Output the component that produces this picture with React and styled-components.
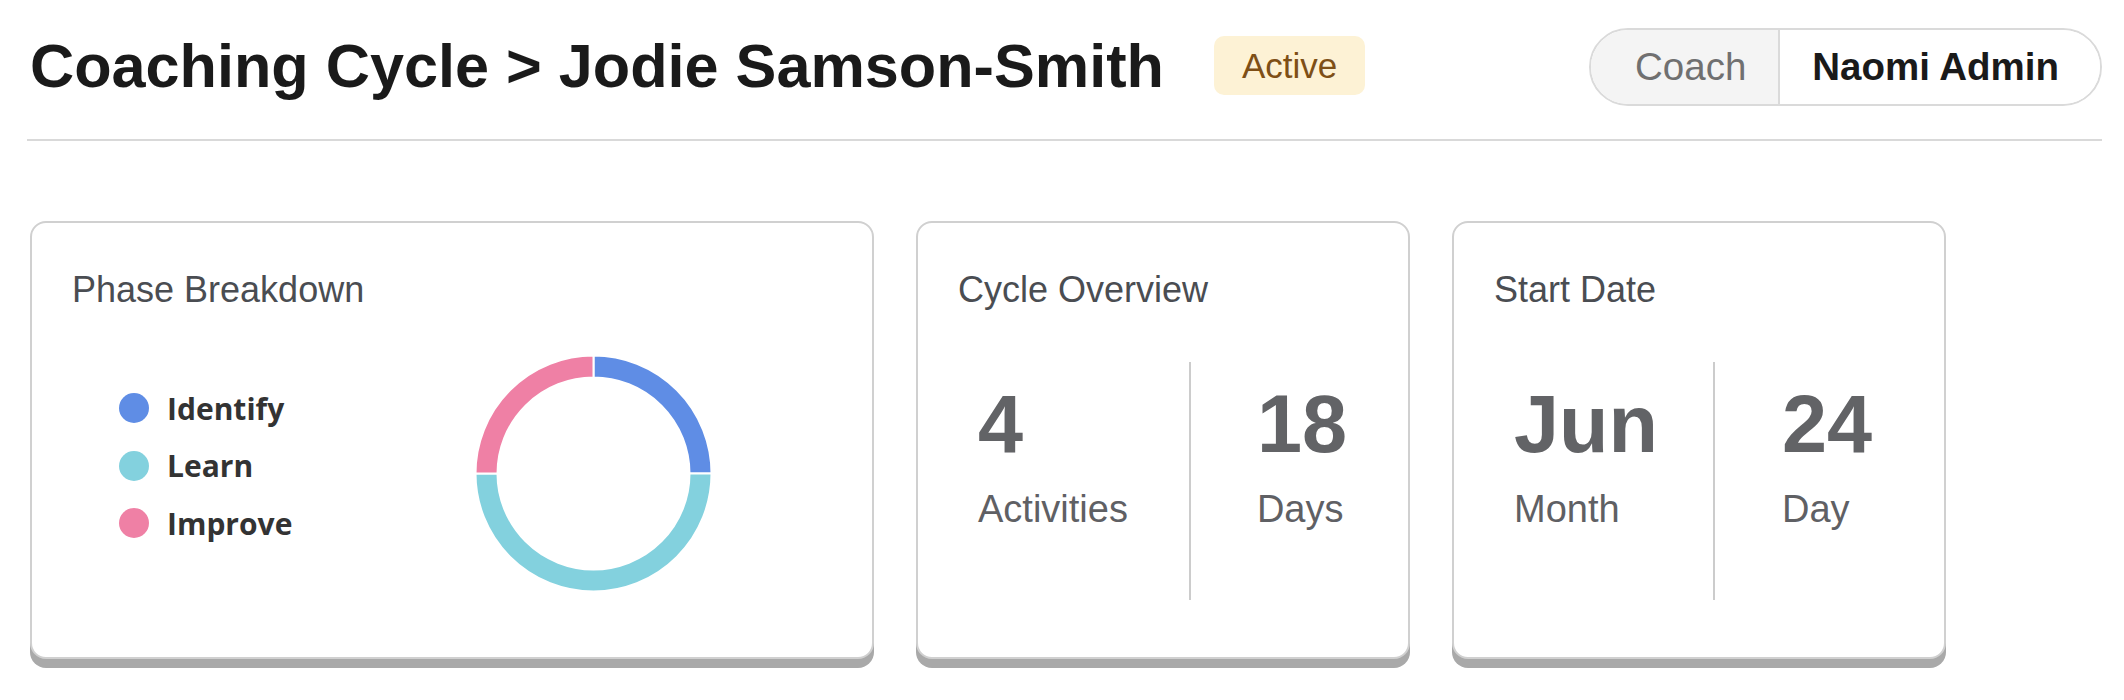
import React from 'react'
import styled, { createGlobalStyle } from 'styled-components'

const GlobalStyle = createGlobalStyle`
  * { box-sizing: border-box; }
  body {
    margin: 0;
    background: #ffffff;
    font-family: "Liberation Sans", Arial, sans-serif;
  }
`

const phases = [
  { name: 'Identify', color: '#5f8de5', value: 1 },
  { name: 'Learn', color: '#83d1de', value: 2 },
  { name: 'Improve', color: '#ef80a5', value: 1 },
]

const point = (cx, cy, r, deg) => {
  const a = ((deg - 90) * Math.PI) / 180
  return [cx + r * Math.cos(a), cy + r * Math.sin(a)]
}

const sector = (cx, cy, ro, ri, start, end) => {
  const large = end - start > 180 ? 1 : 0
  const [x1, y1] = point(cx, cy, ro, start)
  const [x2, y2] = point(cx, cy, ro, end)
  const [x3, y3] = point(cx, cy, ri, end)
  const [x4, y4] = point(cx, cy, ri, start)
  return `M${x1} ${y1} A${ro} ${ro} 0 ${large} 1 ${x2} ${y2} L${x3} ${y3} A${ri} ${ri} 0 ${large} 0 ${x4} ${y4} Z`
}

const Donut = () => {
  const total = phases.reduce((s, p) => s + p.value, 0)
  let angle = 0
  return (
    <svg width="237" height="237" viewBox="0 0 237 237">
      {phases.map((p) => {
        const start = angle
        angle += (p.value / total) * 360
        return (
          <path
            key={p.name}
            d={sector(118.5, 118.5, 118, 96, start, angle)}
            fill={p.color}
            stroke="#ffffff"
            strokeWidth="2"
          />
        )
      })}
    </svg>
  )
}

const App = () => {
  return (
    <Page>
      <GlobalStyle />
      <Header>
        <TitleGroup>
          <Title>Coaching Cycle &gt; Jodie Samson-Smith</Title>
          <Badge>Active</Badge>
        </TitleGroup>
        <Toggle>
          <ToggleOption>Coach</ToggleOption>
          <ToggleOption active>Naomi Admin</ToggleOption>
        </Toggle>
      </Header>
      <Cards>
        <Card width={844}>
          <CardTitle>Phase Breakdown</CardTitle>
          <ChartBody>
            <Legend>
              {phases.map((p) => (
                <LegendItem key={p.name}>
                  <Dot color={p.color} />
                  <LegendLabel>{p.name}</LegendLabel>
                </LegendItem>
              ))}
            </Legend>
            <Donut />
          </ChartBody>
        </Card>
        <Card width={494}>
          <CardTitle>Cycle Overview</CardTitle>
          <StatRow>
            <Stat side="left" space={61}>
              <StatValue>4</StatValue>
              <StatLabel>Activities</StatLabel>
            </Stat>
            <Stat side="right" space={66}>
              <StatValue>18</StatValue>
              <StatLabel>Days</StatLabel>
            </Stat>
          </StatRow>
        </Card>
        <Card width={494}>
          <CardTitle>Start Date</CardTitle>
          <StatRow>
            <Stat side="left" space={55}>
              <StatValue>Jun</StatValue>
              <StatLabel>Month</StatLabel>
            </Stat>
            <Stat side="right" space={67}>
              <StatValue>24</StatValue>
              <StatLabel>Day</StatLabel>
            </Stat>
          </StatRow>
        </Card>
      </Cards>
    </Page>
  )
}

const Page = styled.div`
  width: 2124px;
  height: 700px;
  padding: 0 22px 0 27px;
`

const Header = styled.header`
  display: flex;
  align-items: center;
  justify-content: space-between;
  padding: 28px 0 33px;
  border-bottom: 2px solid #d9d9d9;
`

const TitleGroup = styled.div`
  display: flex;
  align-items: center;
  gap: 50px;
  padding-left: 3px;
`

const Title = styled.h1`
  margin: 0;
  font-size: 61.2px;
  line-height: 1;
  font-weight: 700;
  color: #1a1a1a;
`

const Badge = styled.span`
  display: inline-flex;
  align-items: center;
  height: 59px;
  padding: 0 28px;
  border-radius: 10px;
  background: #fdf2d5;
  color: #7e4f16;
  font-size: 35px;
  margin-top: -2px;
`

const Toggle = styled.div`
  display: flex;
  height: 78px;
  border: 2px solid #dadada;
  border-radius: 39px;
  overflow: hidden;
`

const ToggleOption = styled.div`
  display: flex;
  align-items: center;
  padding: ${(p) => (p.active ? '0 41px 0 32px' : '0 32px 0 44px')};
  font-size: 38.5px;
  font-weight: ${(p) => (p.active ? 700 : 400)};
  color: ${(p) => (p.active ? '#1a1a1a' : '#707070')};
  background: ${(p) => (p.active ? '#ffffff' : '#f4f4f4')};
  border-left: ${(p) => (p.active ? '2px solid #dadada' : 'none')};
`

const Cards = styled.div`
  display: flex;
  gap: 42px;
  margin-top: 80px;
  padding-left: 3px;
`

const Card = styled.section`
  width: ${(p) => p.width}px;
  height: 438px;
  padding: 49px 40px 0;
  border: 2px solid #d0d0d0;
  border-radius: 16px;
  background: #ffffff;
  box-shadow: 0 9px 0 #a9a9a9;
`

const CardTitle = styled.h2`
  margin: 0;
  font-size: 36px;
  line-height: 1;
  font-weight: 400;
  color: #4a4d52;
`

const ChartBody = styled.div`
  display: flex;
  align-items: center;
  margin-top: 47px;
  padding-left: 47px;
  gap: 183px;
`

const Legend = styled.ul`
  list-style: none;
  margin: 0;
  padding: 0 0 16px;
  display: flex;
  flex-direction: column;
`

const LegendItem = styled.li`
  display: flex;
  align-items: center;
  gap: 18px;
  height: 57.5px;
`

const Dot = styled.span`
  width: 30px;
  height: 30px;
  border-radius: 50%;
  background: ${(p) => p.color};
`

const LegendLabel = styled.span`
  font-family: "Open Sans", "Noto Sans", sans-serif;
  font-weight: 700;
  font-size: 30px;
  color: #333333;
`

const StatRow = styled.div`
  display: flex;
  height: 238px;
  margin-top: 54px;
`

const Stat = styled.div`
  display: flex;
  flex-direction: column;
  padding-top: 22px;
  padding-left: ${(p) => (p.side === 'left' ? '20px' : `${p.space}px`)};
  padding-right: ${(p) => (p.side === 'left' ? `${p.space}px` : '0')};
  border-left: ${(p) => (p.side === 'right' ? '2px solid #cccccc' : 'none')};
`

const StatValue = styled.div`
  font-size: 81px;
  line-height: 1;
  font-weight: 700;
  color: #626366;
`

const StatLabel = styled.div`
  margin-top: 25px;
  font-size: 38px;
  line-height: 1;
  color: #5f6064;
`

export default App
